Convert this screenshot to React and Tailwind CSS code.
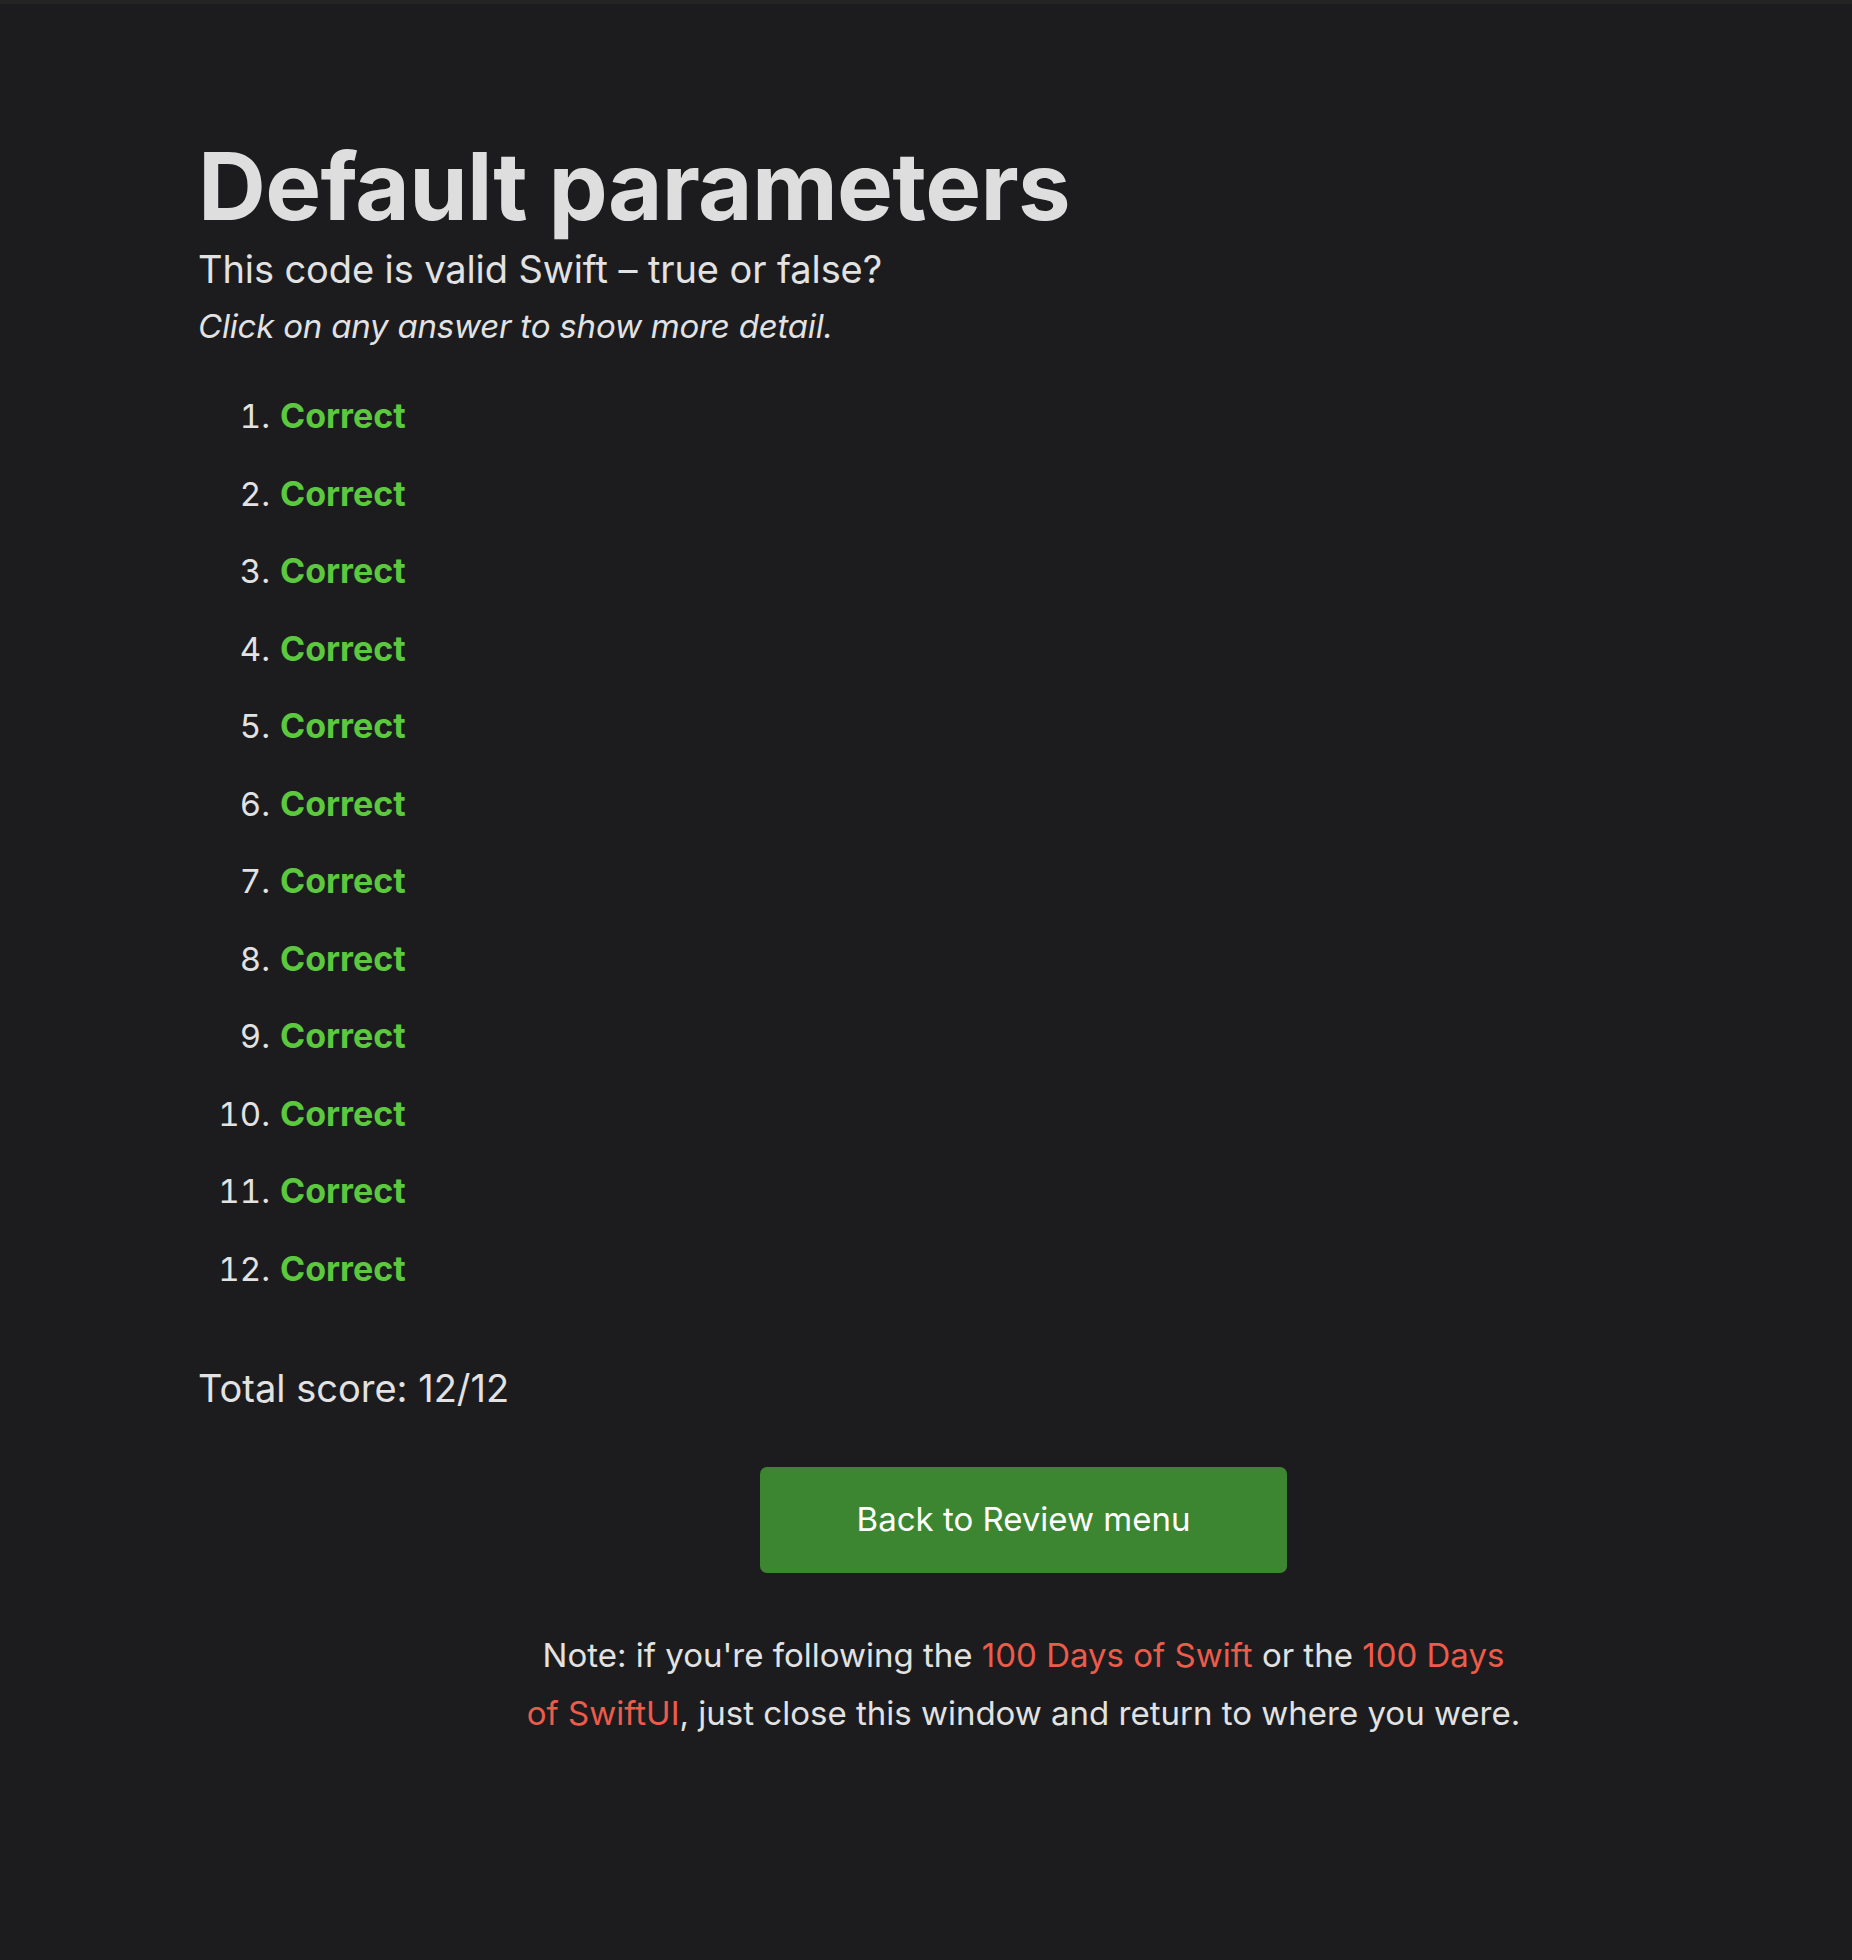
import React from "react";

export default function App() {
  const items = Array.from({ length: 12 }, (_, i) => i + 1);
  return (
    <div className="min-h-[1960px] w-full bg-[#1c1c1e] text-[#e2e2e2] font-['Inter','Noto_Sans',sans-serif]">
      <div className="h-[4px] bg-[#242425]" />
      <div className="ml-[198px] w-[1651px] pt-[135px] flex flex-col">
        <h1 className="text-[94px] leading-[94px] font-bold tracking-[-0.7px] text-[#dedede]">
          Default parameters
        </h1>
        <p className="mt-[13px] text-[38px] leading-[46px] tracking-[-0.1px] text-[#e2e2e2]">
          This code is valid Swift – true or false?
        </p>
        <p className="mt-[12px] text-[33px] leading-[44px] italic tracking-[-0.2px] text-[#e2e2e2]">
          Click on any answer to show more detail.
        </p>
        <ol className="mt-[29px] flex flex-col">
          {items.map((n) => (
            <li key={n} className="flex items-baseline h-[77.5px] leading-[77.5px]">
              <span className="w-[72px] text-right text-[33px] tabular-nums text-[#e2e2e2]">{n}.</span>
              <span className="ml-[10px] text-[34px] font-bold text-[#5bc83e]">Correct</span>
            </li>
          ))}
        </ol>
        <p className="mt-[58px] text-[38px] leading-[46px] text-[#e2e2e2]">
          Total score: 12/12
        </p>
        <div className="mt-[56px] flex justify-center">
          <button className="w-[527px] h-[106px] rounded-[7px] bg-[#3c8631] text-white text-[33px]">
            Back to Review menu
          </button>
        </div>
        <div className="mt-[54px] flex justify-center">
          <p className="text-center text-[33px] leading-[57.5px] whitespace-nowrap text-[#e2e2e2]">
            Note: if you're following the{" "}
            <a className="text-[#ee5b4b]">100 Days of Swift</a> or the{" "}
            <a className="text-[#ee5b4b]">
              100 Days
              <br />
              of SwiftUI
            </a>
            , just close this window and return to where you were.
          </p>
        </div>
      </div>
    </div>
  );
}
